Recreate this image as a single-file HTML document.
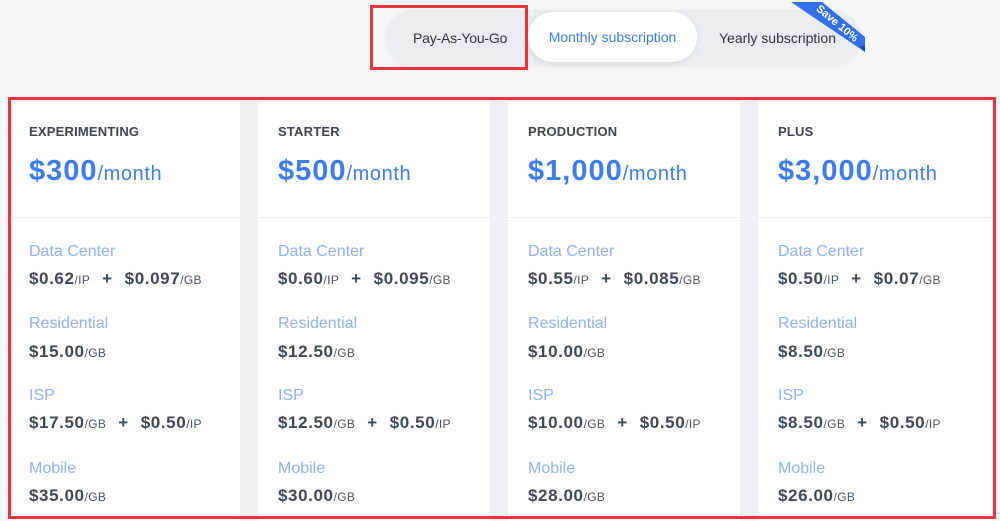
<!DOCTYPE html>
<html><head><meta charset="utf-8"><style>
*{margin:0;padding:0;box-sizing:border-box}
body{width:1000px;height:520px;background:#f5f6f8;font-family:"Liberation Sans",sans-serif;position:relative;overflow:hidden}
.abs{position:absolute}
.pill{left:386px;top:10px;width:474px;height:54px;border-radius:27px;background:#e9ecf0;box-shadow:0 2px 6px rgba(0,0,0,.06)}
.tab{font-size:14px;color:#2c3440;top:30px}
.mon{left:528px;top:12px;width:169px;height:50px;border-radius:25px;background:#fff;box-shadow:0 2px 6px rgba(0,0,0,.08);color:#3b7cf5;font-size:14px;text-align:center;line-height:50px}
.redbox{border:3px solid #f0323a}
.wrap{left:8px;top:97px;width:988px;height:423px;background:#eef0f3}
.card{top:101px;height:420px;background:#fff}
.hdr{position:absolute;left:0;right:0;top:0;height:117px;border-bottom:1px solid #e8ebef}
.t{position:absolute;left:17px;top:23px;font-size:13px;font-weight:bold;color:#3a4656;letter-spacing:.2px}
.p{position:absolute;left:17px;top:54px;color:#3b7cf5;font-size:29px;font-weight:bold;white-space:nowrap;letter-spacing:1px}
.p span{font-size:20px;font-weight:normal;letter-spacing:.6px}
.l{position:absolute;left:17px;font-size:16px;color:#8eb2f4}
.v{position:absolute;left:17px;font-size:17px;font-weight:bold;color:#3e4957;white-space:nowrap;letter-spacing:.6px}
.v small{font-size:12px;font-weight:normal;color:#4a5563;letter-spacing:.3px}
.v b{margin:0 12px;font-weight:bold}
</style></head><body>
<div class="abs pill"></div>
<div class="abs tab" style="left:413px;letter-spacing:-.2px">Pay-As-You-Go</div>
<div class="abs mon">Monthly subscription</div>
<div class="abs tab" style="left:719px">Yearly subscription</div>
<svg class="abs" style="left:780px;top:0" width="90" height="60">
<polygon points="11,2 42,2 85,37 85,52" fill="#2f6ff0"/>
<polygon points="79,46 85,46 85,52" fill="#1a4fc0"/>
<text x="0" y="0" transform="translate(55,26) rotate(40)" fill="#fff" font-size="11" font-weight="bold" text-anchor="middle" font-family="Liberation Sans">Save 10%</text>
</svg>
<div class="abs redbox" style="left:370px;top:5px;width:158px;height:65px"></div>

<div class="abs wrap"></div>

<div class="abs card" style="left:12px;width:228px">
<div class="hdr"></div><div class="t">EXPERIMENTING</div><div class="p">$300<span>/month</span></div>
<div class="l" style="top:142px">Data Center</div><div class="v" style="top:168px">$0.62<small>/IP</small><b>+</b>$0.097<small>/GB</small></div>
<div class="l" style="top:214px">Residential</div><div class="v" style="top:241px">$15.00<small>/GB</small></div>
<div class="l" style="top:286px">ISP</div><div class="v" style="top:312px">$17.50<small>/GB</small><b>+</b>$0.50<small>/IP</small></div>
<div class="l" style="top:359px">Mobile</div><div class="v" style="top:385px">$35.00<small>/GB</small></div>
</div>
<div class="abs card" style="left:258px;width:232px">
<div class="hdr"></div><div class="t" style="left:20px">STARTER</div><div class="p" style="left:20px">$500<span>/month</span></div>
<div class="l" style="top:142px;left:20px">Data Center</div><div class="v" style="top:168px;left:20px">$0.60<small>/IP</small><b>+</b>$0.095<small>/GB</small></div>
<div class="l" style="top:214px;left:20px">Residential</div><div class="v" style="top:241px;left:20px">$12.50<small>/GB</small></div>
<div class="l" style="top:286px;left:20px">ISP</div><div class="v" style="top:312px;left:20px">$12.50<small>/GB</small><b>+</b>$0.50<small>/IP</small></div>
<div class="l" style="top:359px;left:20px">Mobile</div><div class="v" style="top:385px;left:20px">$30.00<small>/GB</small></div>
</div>
<div class="abs card" style="left:508px;width:232px">
<div class="hdr"></div><div class="t" style="left:20px">PRODUCTION</div><div class="p" style="left:20px">$1,000<span>/month</span></div>
<div class="l" style="top:142px;left:20px">Data Center</div><div class="v" style="top:168px;left:20px">$0.55<small>/IP</small><b>+</b>$0.085<small>/GB</small></div>
<div class="l" style="top:214px;left:20px">Residential</div><div class="v" style="top:241px;left:20px">$10.00<small>/GB</small></div>
<div class="l" style="top:286px;left:20px">ISP</div><div class="v" style="top:312px;left:20px">$10.00<small>/GB</small><b>+</b>$0.50<small>/IP</small></div>
<div class="l" style="top:359px;left:20px">Mobile</div><div class="v" style="top:385px;left:20px">$28.00<small>/GB</small></div>
</div>
<div class="abs card" style="left:758px;width:234px">
<div class="hdr"></div><div class="t" style="left:20px">PLUS</div><div class="p" style="left:20px">$3,000<span>/month</span></div>
<div class="l" style="top:142px;left:20px">Data Center</div><div class="v" style="top:168px;left:20px">$0.50<small>/IP</small><b>+</b>$0.07<small>/GB</small></div>
<div class="l" style="top:214px;left:20px">Residential</div><div class="v" style="top:241px;left:20px">$8.50<small>/GB</small></div>
<div class="l" style="top:286px;left:20px">ISP</div><div class="v" style="top:312px;left:20px">$8.50<small>/GB</small><b>+</b>$0.50<small>/IP</small></div>
<div class="l" style="top:359px;left:20px">Mobile</div><div class="v" style="top:385px;left:20px">$26.00<small>/GB</small></div>
</div>
<div class="abs redbox" style="left:8px;top:97px;width:988px;height:422px"></div>
</body></html>
